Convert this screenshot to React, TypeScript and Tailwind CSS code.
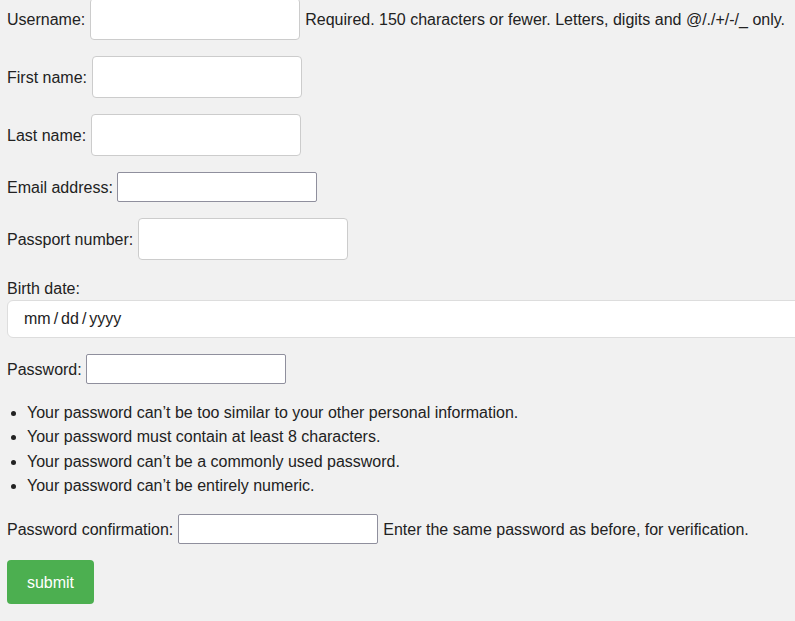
import React from 'react';

const styled = 'w-[210px] h-[42px] bg-white border border-[#cccccc] rounded-[4px] px-3 outline-none';
const plain = 'w-[200px] h-[30px] bg-white border border-[#8f8f9d] rounded-[2px] px-1 outline-none';

const Row: React.FC<{ label: string; big?: boolean; type?: string; help?: string }> = ({ label, big, type = 'text', help }) => (
  <div className="flex items-center gap-[4.5px] whitespace-nowrap">
    <label className="pt-[2px]">{label}</label>
    <input type={type} className={big ? styled : plain} />
    {help && <span className="pt-[2px] pl-px">{help}</span>}
  </div>
);

export default function App() {
  const rules = [
    'Your password can’t be too similar to your other personal information.',
    'Your password must contain at least 8 characters.',
    'Your password can’t be a commonly used password.',
    'Your password can’t be entirely numeric.',
  ];

  return (
    <div className="min-h-screen bg-[#f1f1f1] overflow-hidden font-['Liberation_Sans',Arial,sans-serif] text-[16px] text-[#222222]">
      <form className="-mt-[2px] pl-[7px] flex flex-col gap-4">
        <Row label="Username:" big help="Required. 150 characters or fewer. Letters, digits and @/./+/-/_ only." />
        <Row label="First name:" big />
        <Row label="Last name:" big />
        <Row label="Email address:" type="email" />
        <Row label="Passport number:" big />
        <div className="flex flex-col gap-px">
          <label className="pt-[2px] leading-[21px]">Birth date:</label>
          <div className="w-[820px] h-[38px] bg-white border border-[#dddddd] rounded-[6px] pl-4 flex items-center gap-[3px]">
            <span>mm</span>
            <span>/</span>
            <span>dd</span>
            <span>/</span>
            <span>yyyy</span>
          </div>
        </div>
        <Row label="Password:" type="password" />
        <ul className="list-disc pl-[20px] pt-px leading-[24.25px]">
          {rules.map((r, i) => (
            <li key={i}>{r}</li>
          ))}
        </ul>
        <Row label="Password confirmation:" type="password" help="Enter the same password as before, for verification." />
        <div>
          <button type="button" className="w-[87px] h-[44px] bg-[#4caf50] text-white rounded-[4px] pt-[2px]">
            submit
          </button>
        </div>
      </form>
    </div>
  );
}
